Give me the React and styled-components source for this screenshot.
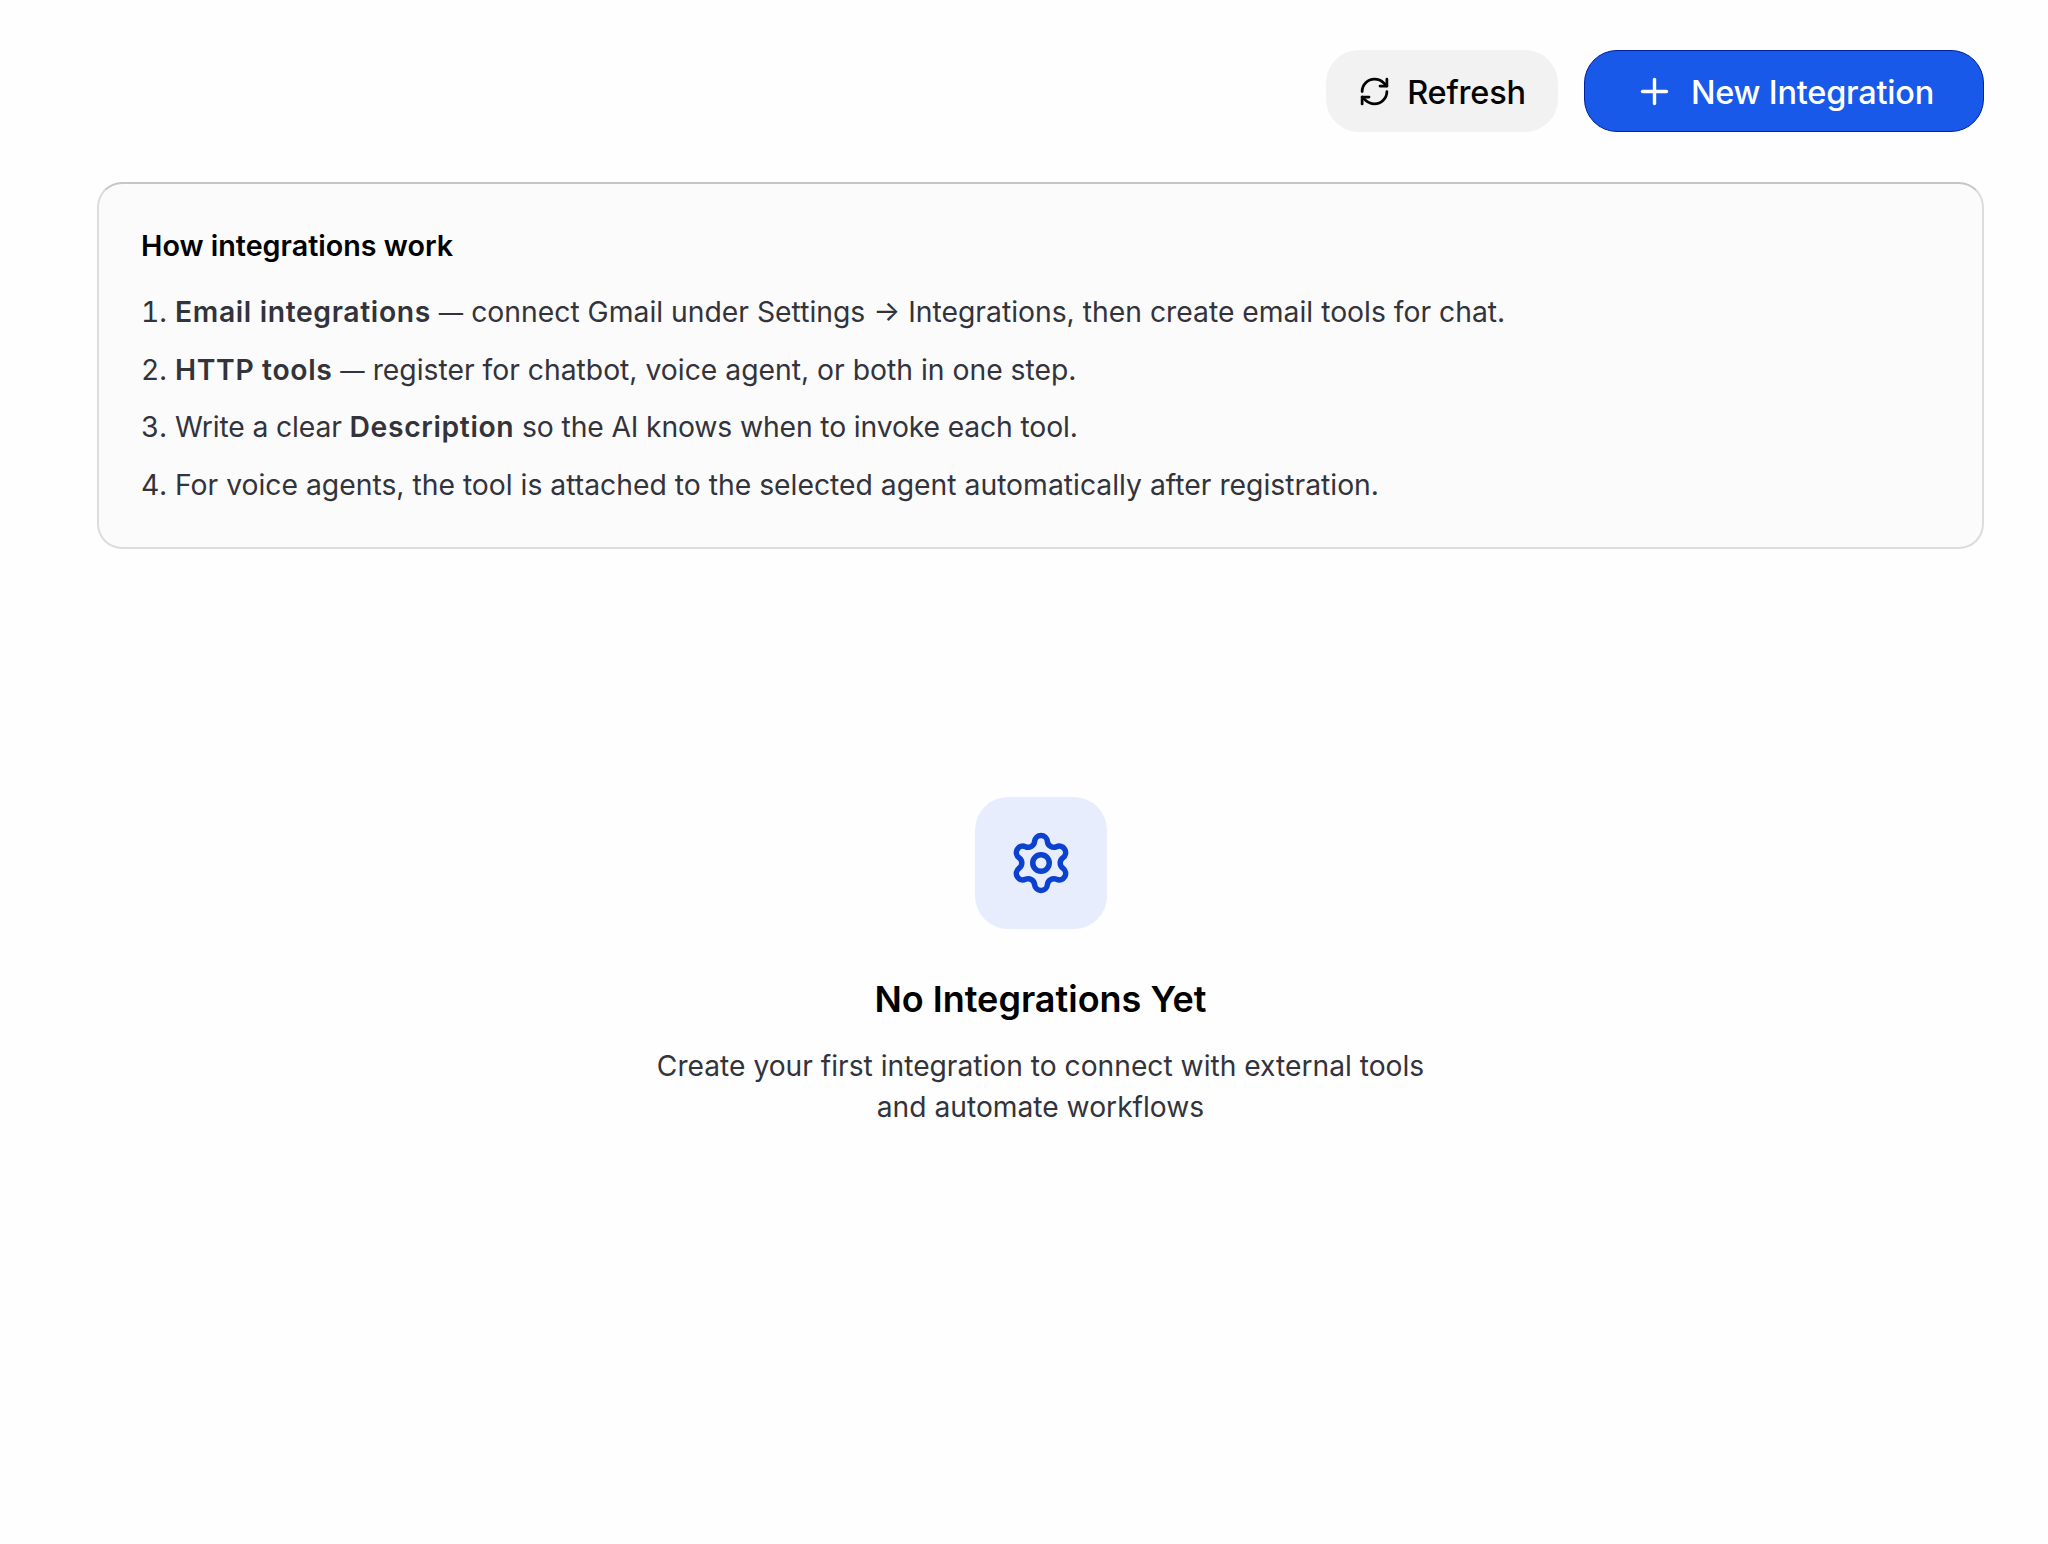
import React from 'react';
import styled, { createGlobalStyle } from 'styled-components';
import { Plus, RefreshCw, Settings } from 'lucide-react';

const GlobalStyle = createGlobalStyle`
    * {
        box-sizing: border-box;
    }
    body {
        margin: 0;
        background-color: #fefefe;
        font-family: Inter, 'Liberation Sans', sans-serif;
    }
`;

const Page = styled.main`
    display: flex;
    flex-direction: column;
    min-height: 1544px;
    padding: 50px 64px 0 97px;
`;

const Toolbar = styled.div`
    display: flex;
    justify-content: flex-end;
    gap: 26px;
    margin-bottom: 50px;
`;

const Button = styled.button`
    display: flex;
    align-items: center;
    justify-content: center;
    gap: 16px;
    width: ${({ $primary }) => ($primary ? '400px' : '232px')};
    height: 82px;
    padding: 0;
    border: ${({ $primary }) => ($primary ? '1px solid #001f9c' : '0')};
    border-radius: 33px;
    color: ${({ $primary }) => ($primary ? '#fff' : '#050505')};
    background-color: ${({ $primary }) => ($primary ? '#1859ea' : '#f2f2f2')};
    font-family: inherit;
    font-size: 32.5px;
    font-weight: 500;
    line-height: 1;
    letter-spacing: -0.22px;
`;

const ButtonLabel = styled.span`
    padding-top: 4px;
`;

const InfoCard = styled.section`
    height: 367px;
    padding: 43px 42px 0;
    border: 2px solid #dcdcdc;
    border-top-color: #c6c6c6;
    border-radius: 25px;
    background-color: #fbfbfb;
`;

const InfoTitle = styled.h2`
    margin: 0 0 19px;
    color: #000;
    font-size: 28.7px;
    font-weight: 600;
    line-height: 38px;
`;

const Steps = styled.ol`
    margin: 0;
    padding: 0;
    list-style: none;
    color: #33333b;
    font-size: 28.3px;
    line-height: 57.5px;
    white-space: nowrap;
`;

const Step = styled.li`
    display: flex;
    height: 57.5px;
    letter-spacing: ${({ $tracking }) => $tracking || 'normal'};
`;

const StepNumber = styled.span`
    width: 34px;
    font-variant-numeric: tabular-nums;
`;

const Strong = styled.strong`
    font-weight: 600;
    letter-spacing: 0.64px;
`;

const Dash = styled.span`
    font-size: 0.86em;
    line-height: 1;
`;

const EmptyState = styled.section`
    display: flex;
    flex-direction: column;
    align-items: center;
    margin-top: 248px;
    text-align: center;
`;

const IconTile = styled.div`
    display: flex;
    align-items: center;
    justify-content: center;
    width: 132px;
    height: 132px;
    border-radius: 33px;
    color: #0b41cf;
    background-color: #e7edfd;
`;

const EmptyTitle = styled.h3`
    margin: 45px 0 0;
    color: #000;
    font-size: 36px;
    font-weight: 600;
    line-height: 50px;
`;

const EmptyText = styled.p`
    width: 800px;
    margin: 22px 0 0;
    color: #33333b;
    font-size: 28.2px;
    line-height: 41px;
`;

export default function App() {
    return (
        <>
            <GlobalStyle />
            <Page>
                <Toolbar>
                    <Button type="button">
                        <RefreshCw size={33} />
                        <ButtonLabel>Refresh</ButtonLabel>
                    </Button>
                    <Button type="button" $primary>
                        <Plus size={41} />
                        <ButtonLabel>New Integration</ButtonLabel>
                    </Button>
                </Toolbar>
                <InfoCard>
                    <InfoTitle>How integrations work</InfoTitle>
                    <Steps>
                        <Step>
                            <StepNumber>1.</StepNumber>
                            <span>
                                <Strong>Email integrations</Strong> <Dash>—</Dash> connect Gmail under Settings →
                                Integrations, then create email tools for chat.
                            </span>
                        </Step>
                        <Step>
                            <StepNumber>2.</StepNumber>
                            <span>
                                <Strong>HTTP tools</Strong> <Dash>—</Dash> register for chatbot, voice agent, or both in
                                one step.
                            </span>
                        </Step>
                        <Step $tracking="-0.14px">
                            <StepNumber>3.</StepNumber>
                            <span>
                                Write a clear <Strong>Description</Strong> so the AI knows when to invoke each tool.
                            </span>
                        </Step>
                        <Step>
                            <StepNumber>4.</StepNumber>
                            <span>
                                For voice agents, the tool is attached to the selected agent automatically after
                                registration.
                            </span>
                        </Step>
                    </Steps>
                </InfoCard>
                <EmptyState>
                    <IconTile>
                        <Settings size={66} />
                    </IconTile>
                    <EmptyTitle>No Integrations Yet</EmptyTitle>
                    <EmptyText>
                        Create your first integration to connect with external tools
                        <br />
                        and automate workflows
                    </EmptyText>
                </EmptyState>
            </Page>
        </>
    );
}
